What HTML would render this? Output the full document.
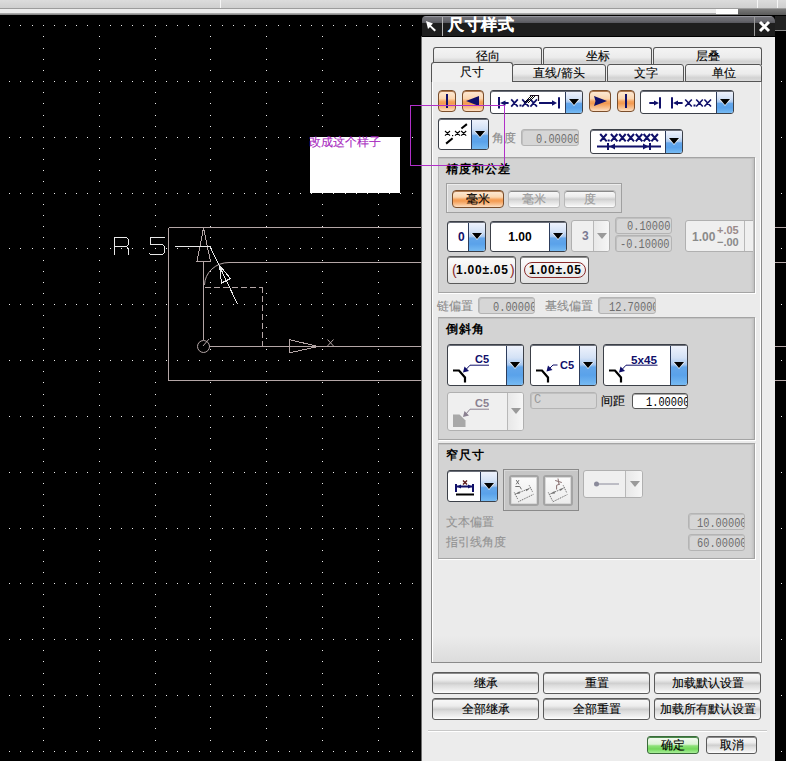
<!DOCTYPE html><html><head><meta charset="utf-8"><style>
*{box-sizing:border-box}
body{margin:0;width:786px;height:761px;overflow:hidden;background:#000;position:relative;font-family:'Liberation Sans', sans-serif;font-size:12px}
.a{position:absolute}
.t{position:absolute;white-space:nowrap;line-height:14px;-webkit-text-stroke:0.12px currentColor}
.gbtn,.tab,.obtn{-webkit-text-stroke:0.12px currentColor}
.combo{position:absolute;background:#fff;border:1px solid #3c4048;border-radius:3px;box-shadow:inset 0 1px 0 #6a6e78;overflow:hidden}
.cbtn{position:absolute;top:1px;bottom:0;right:0;background:linear-gradient(#eef2fc 0%,#d4e2f6 30%,#a8c8f0 48%,#64a6ea 54%,#5aa2ea 75%,#76baf2 100%);border-left:1px solid #2c3c5c}
.tri{position:absolute;width:0;height:0;border-left:5px solid transparent;border-right:5px solid transparent;border-top:6px solid #000}
.triw{position:absolute;width:0;height:0;border-left:6px solid transparent;border-right:6px solid transparent;border-top:7px solid rgba(255,255,255,0.85)}
.obtn{position:absolute;border:1px solid #7a4e2c;border-radius:4px;box-shadow:inset 0 1px 0 #b07a50;background:linear-gradient(#fdebd8 0%,#fbd6b0 38%,#f5a460 52%,#f39a50 62%,#f8bc88 82%,#fde0c4 100%)}
.gbtn{position:absolute;border:1px solid #5a5a5a;border-radius:3px;background:linear-gradient(#fafafa 0%,#ececec 35%,#cfcfcf 52%,#dcdcdc 62%,#f2f2f2 90%,#fff 100%);box-shadow:inset 0 1px 0 #8a8a8a;text-align:center;color:#000}
.dis{position:absolute;border:1px solid #b4b4b4;border-radius:3px;background:#d6d6d6;box-shadow:inset 1px 1px 0 #c0c0c0;overflow:hidden;font-family:'Liberation Mono',monospace;font-size:12px;color:#6e6e6e}
.dis span,.inp span{display:inline-block;transform:scaleX(0.86);transform-origin:0 0}
.grp{position:absolute;background:#d3d3d3;border:1px solid #a4a4a4;border-left-color:#b4b4b4;box-shadow:inset 0 1px 0 #c2c2c2,inset -3px 0 3px -2px rgba(0,0,0,0.12),1px 1px 0 #fff}
.tab{position:absolute;border:1px solid #555;border-bottom:none;border-radius:3px 3px 0 0;background:linear-gradient(#f4f4f4 0%,#ececec 55%,#d2d2d2 80%,#dcdcdc 100%);text-align:center;color:#000}
</style></head><body>
<div class="a" style="left:0;top:0;width:786px;height:8px;background:linear-gradient(#dcdcdc,#cfcfcf)"></div>
<div class="a" style="left:220px;top:0;width:1px;height:8px;background:#f6f6f6"></div>
<div class="a" style="left:757px;top:0;width:1px;height:8px;background:#f6f6f6"></div>
<div class="a" style="left:777px;top:0;width:1px;height:8px;background:#f6f6f6"></div>
<div class="a" style="left:0;top:8px;width:786px;height:1px;background:#9c9c9c"></div>
<div class="a" style="left:0;top:9px;width:786px;height:5px;background:#ececec"></div>
<div class="a" style="left:0;top:13px;width:786px;height:3px;background:linear-gradient(#b8b8b8,#5a5a5a)"></div>
<div class="a" style="left:716px;top:9px;width:22px;height:5px;background:#fff"></div>
<div class="a" style="left:738px;top:9px;width:48px;height:6px;background:linear-gradient(#7a7a7a,#5a5a5a)"></div>
<svg class="a" style="left:0;top:0" width="786" height="761"><path d="M9 25h1v1h-1zM9 81h1v1h-1zM9 137h1v1h-1zM9 193h1v1h-1zM9 248h1v1h-1zM9 304h1v1h-1zM9 360h1v1h-1zM9 416h1v1h-1zM9 472h1v1h-1zM9 528h1v1h-1zM9 583h1v1h-1zM9 639h1v1h-1zM9 695h1v1h-1zM9 751h1v1h-1zM20 25h1v1h-1zM20 81h1v1h-1zM20 137h1v1h-1zM20 193h1v1h-1zM20 248h1v1h-1zM20 304h1v1h-1zM20 360h1v1h-1zM20 416h1v1h-1zM20 472h1v1h-1zM20 528h1v1h-1zM20 583h1v1h-1zM20 639h1v1h-1zM20 695h1v1h-1zM20 751h1v1h-1zM32 25h1v1h-1zM32 81h1v1h-1zM32 137h1v1h-1zM32 193h1v1h-1zM32 248h1v1h-1zM32 304h1v1h-1zM32 360h1v1h-1zM32 416h1v1h-1zM32 472h1v1h-1zM32 528h1v1h-1zM32 583h1v1h-1zM32 639h1v1h-1zM32 695h1v1h-1zM32 751h1v1h-1zM43 25h1v1h-1zM43 36h1v1h-1zM43 48h1v1h-1zM43 59h1v1h-1zM43 70h1v1h-1zM43 81h1v1h-1zM43 92h1v1h-1zM43 103h1v1h-1zM43 115h1v1h-1zM43 126h1v1h-1zM43 137h1v1h-1zM43 148h1v1h-1zM43 159h1v1h-1zM43 170h1v1h-1zM43 181h1v1h-1zM43 193h1v1h-1zM43 204h1v1h-1zM43 215h1v1h-1zM43 226h1v1h-1zM43 237h1v1h-1zM43 248h1v1h-1zM43 260h1v1h-1zM43 271h1v1h-1zM43 282h1v1h-1zM43 293h1v1h-1zM43 304h1v1h-1zM43 315h1v1h-1zM43 327h1v1h-1zM43 338h1v1h-1zM43 349h1v1h-1zM43 360h1v1h-1zM43 371h1v1h-1zM43 382h1v1h-1zM43 394h1v1h-1zM43 405h1v1h-1zM43 416h1v1h-1zM43 427h1v1h-1zM43 438h1v1h-1zM43 449h1v1h-1zM43 461h1v1h-1zM43 472h1v1h-1zM43 483h1v1h-1zM43 494h1v1h-1zM43 505h1v1h-1zM43 516h1v1h-1zM43 528h1v1h-1zM43 539h1v1h-1zM43 550h1v1h-1zM43 561h1v1h-1zM43 572h1v1h-1zM43 583h1v1h-1zM43 594h1v1h-1zM43 606h1v1h-1zM43 617h1v1h-1zM43 628h1v1h-1zM43 639h1v1h-1zM43 650h1v1h-1zM43 661h1v1h-1zM43 673h1v1h-1zM43 684h1v1h-1zM43 695h1v1h-1zM43 706h1v1h-1zM43 717h1v1h-1zM43 728h1v1h-1zM43 740h1v1h-1zM43 751h1v1h-1zM54 25h1v1h-1zM54 81h1v1h-1zM54 137h1v1h-1zM54 193h1v1h-1zM54 248h1v1h-1zM54 304h1v1h-1zM54 360h1v1h-1zM54 416h1v1h-1zM54 472h1v1h-1zM54 528h1v1h-1zM54 583h1v1h-1zM54 639h1v1h-1zM54 695h1v1h-1zM54 751h1v1h-1zM65 25h1v1h-1zM65 81h1v1h-1zM65 137h1v1h-1zM65 193h1v1h-1zM65 248h1v1h-1zM65 304h1v1h-1zM65 360h1v1h-1zM65 416h1v1h-1zM65 472h1v1h-1zM65 528h1v1h-1zM65 583h1v1h-1zM65 639h1v1h-1zM65 695h1v1h-1zM65 751h1v1h-1zM76 25h1v1h-1zM76 81h1v1h-1zM76 137h1v1h-1zM76 193h1v1h-1zM76 248h1v1h-1zM76 304h1v1h-1zM76 360h1v1h-1zM76 416h1v1h-1zM76 472h1v1h-1zM76 528h1v1h-1zM76 583h1v1h-1zM76 639h1v1h-1zM76 695h1v1h-1zM76 751h1v1h-1zM87 25h1v1h-1zM87 81h1v1h-1zM87 137h1v1h-1zM87 193h1v1h-1zM87 248h1v1h-1zM87 304h1v1h-1zM87 360h1v1h-1zM87 416h1v1h-1zM87 472h1v1h-1zM87 528h1v1h-1zM87 583h1v1h-1zM87 639h1v1h-1zM87 695h1v1h-1zM87 751h1v1h-1zM99 25h1v1h-1zM99 36h1v1h-1zM99 48h1v1h-1zM99 59h1v1h-1zM99 70h1v1h-1zM99 81h1v1h-1zM99 92h1v1h-1zM99 103h1v1h-1zM99 115h1v1h-1zM99 126h1v1h-1zM99 137h1v1h-1zM99 148h1v1h-1zM99 159h1v1h-1zM99 170h1v1h-1zM99 181h1v1h-1zM99 193h1v1h-1zM99 204h1v1h-1zM99 215h1v1h-1zM99 226h1v1h-1zM99 237h1v1h-1zM99 248h1v1h-1zM99 260h1v1h-1zM99 271h1v1h-1zM99 282h1v1h-1zM99 293h1v1h-1zM99 304h1v1h-1zM99 315h1v1h-1zM99 327h1v1h-1zM99 338h1v1h-1zM99 349h1v1h-1zM99 360h1v1h-1zM99 371h1v1h-1zM99 382h1v1h-1zM99 394h1v1h-1zM99 405h1v1h-1zM99 416h1v1h-1zM99 427h1v1h-1zM99 438h1v1h-1zM99 449h1v1h-1zM99 461h1v1h-1zM99 472h1v1h-1zM99 483h1v1h-1zM99 494h1v1h-1zM99 505h1v1h-1zM99 516h1v1h-1zM99 528h1v1h-1zM99 539h1v1h-1zM99 550h1v1h-1zM99 561h1v1h-1zM99 572h1v1h-1zM99 583h1v1h-1zM99 594h1v1h-1zM99 606h1v1h-1zM99 617h1v1h-1zM99 628h1v1h-1zM99 639h1v1h-1zM99 650h1v1h-1zM99 661h1v1h-1zM99 673h1v1h-1zM99 684h1v1h-1zM99 695h1v1h-1zM99 706h1v1h-1zM99 717h1v1h-1zM99 728h1v1h-1zM99 740h1v1h-1zM99 751h1v1h-1zM110 25h1v1h-1zM110 81h1v1h-1zM110 137h1v1h-1zM110 193h1v1h-1zM110 248h1v1h-1zM110 304h1v1h-1zM110 360h1v1h-1zM110 416h1v1h-1zM110 472h1v1h-1zM110 528h1v1h-1zM110 583h1v1h-1zM110 639h1v1h-1zM110 695h1v1h-1zM110 751h1v1h-1zM121 25h1v1h-1zM121 81h1v1h-1zM121 137h1v1h-1zM121 193h1v1h-1zM121 248h1v1h-1zM121 304h1v1h-1zM121 360h1v1h-1zM121 416h1v1h-1zM121 472h1v1h-1zM121 528h1v1h-1zM121 583h1v1h-1zM121 639h1v1h-1zM121 695h1v1h-1zM121 751h1v1h-1zM132 25h1v1h-1zM132 81h1v1h-1zM132 137h1v1h-1zM132 193h1v1h-1zM132 248h1v1h-1zM132 304h1v1h-1zM132 360h1v1h-1zM132 416h1v1h-1zM132 472h1v1h-1zM132 528h1v1h-1zM132 583h1v1h-1zM132 639h1v1h-1zM132 695h1v1h-1zM132 751h1v1h-1zM143 25h1v1h-1zM143 81h1v1h-1zM143 137h1v1h-1zM143 193h1v1h-1zM143 248h1v1h-1zM143 304h1v1h-1zM143 360h1v1h-1zM143 416h1v1h-1zM143 472h1v1h-1zM143 528h1v1h-1zM143 583h1v1h-1zM143 639h1v1h-1zM143 695h1v1h-1zM143 751h1v1h-1zM155 25h1v1h-1zM155 36h1v1h-1zM155 48h1v1h-1zM155 59h1v1h-1zM155 70h1v1h-1zM155 81h1v1h-1zM155 92h1v1h-1zM155 103h1v1h-1zM155 115h1v1h-1zM155 126h1v1h-1zM155 137h1v1h-1zM155 148h1v1h-1zM155 159h1v1h-1zM155 170h1v1h-1zM155 181h1v1h-1zM155 193h1v1h-1zM155 204h1v1h-1zM155 215h1v1h-1zM155 226h1v1h-1zM155 237h1v1h-1zM155 248h1v1h-1zM155 260h1v1h-1zM155 271h1v1h-1zM155 282h1v1h-1zM155 293h1v1h-1zM155 304h1v1h-1zM155 315h1v1h-1zM155 327h1v1h-1zM155 338h1v1h-1zM155 349h1v1h-1zM155 360h1v1h-1zM155 371h1v1h-1zM155 382h1v1h-1zM155 394h1v1h-1zM155 405h1v1h-1zM155 416h1v1h-1zM155 427h1v1h-1zM155 438h1v1h-1zM155 449h1v1h-1zM155 461h1v1h-1zM155 472h1v1h-1zM155 483h1v1h-1zM155 494h1v1h-1zM155 505h1v1h-1zM155 516h1v1h-1zM155 528h1v1h-1zM155 539h1v1h-1zM155 550h1v1h-1zM155 561h1v1h-1zM155 572h1v1h-1zM155 583h1v1h-1zM155 594h1v1h-1zM155 606h1v1h-1zM155 617h1v1h-1zM155 628h1v1h-1zM155 639h1v1h-1zM155 650h1v1h-1zM155 661h1v1h-1zM155 673h1v1h-1zM155 684h1v1h-1zM155 695h1v1h-1zM155 706h1v1h-1zM155 717h1v1h-1zM155 728h1v1h-1zM155 740h1v1h-1zM155 751h1v1h-1zM166 25h1v1h-1zM166 81h1v1h-1zM166 137h1v1h-1zM166 193h1v1h-1zM166 248h1v1h-1zM166 304h1v1h-1zM166 360h1v1h-1zM166 416h1v1h-1zM166 472h1v1h-1zM166 528h1v1h-1zM166 583h1v1h-1zM166 639h1v1h-1zM166 695h1v1h-1zM166 751h1v1h-1zM177 25h1v1h-1zM177 81h1v1h-1zM177 137h1v1h-1zM177 193h1v1h-1zM177 248h1v1h-1zM177 304h1v1h-1zM177 360h1v1h-1zM177 416h1v1h-1zM177 472h1v1h-1zM177 528h1v1h-1zM177 583h1v1h-1zM177 639h1v1h-1zM177 695h1v1h-1zM177 751h1v1h-1zM188 25h1v1h-1zM188 81h1v1h-1zM188 137h1v1h-1zM188 193h1v1h-1zM188 248h1v1h-1zM188 304h1v1h-1zM188 360h1v1h-1zM188 416h1v1h-1zM188 472h1v1h-1zM188 528h1v1h-1zM188 583h1v1h-1zM188 639h1v1h-1zM188 695h1v1h-1zM188 751h1v1h-1zM199 25h1v1h-1zM199 81h1v1h-1zM199 137h1v1h-1zM199 193h1v1h-1zM199 248h1v1h-1zM199 304h1v1h-1zM199 360h1v1h-1zM199 416h1v1h-1zM199 472h1v1h-1zM199 528h1v1h-1zM199 583h1v1h-1zM199 639h1v1h-1zM199 695h1v1h-1zM199 751h1v1h-1zM210 25h1v1h-1zM210 36h1v1h-1zM210 48h1v1h-1zM210 59h1v1h-1zM210 70h1v1h-1zM210 81h1v1h-1zM210 92h1v1h-1zM210 103h1v1h-1zM210 115h1v1h-1zM210 126h1v1h-1zM210 137h1v1h-1zM210 148h1v1h-1zM210 159h1v1h-1zM210 170h1v1h-1zM210 181h1v1h-1zM210 193h1v1h-1zM210 204h1v1h-1zM210 215h1v1h-1zM210 226h1v1h-1zM210 237h1v1h-1zM210 248h1v1h-1zM210 260h1v1h-1zM210 271h1v1h-1zM210 282h1v1h-1zM210 293h1v1h-1zM210 304h1v1h-1zM210 315h1v1h-1zM210 327h1v1h-1zM210 338h1v1h-1zM210 349h1v1h-1zM210 360h1v1h-1zM210 371h1v1h-1zM210 382h1v1h-1zM210 394h1v1h-1zM210 405h1v1h-1zM210 416h1v1h-1zM210 427h1v1h-1zM210 438h1v1h-1zM210 449h1v1h-1zM210 461h1v1h-1zM210 472h1v1h-1zM210 483h1v1h-1zM210 494h1v1h-1zM210 505h1v1h-1zM210 516h1v1h-1zM210 528h1v1h-1zM210 539h1v1h-1zM210 550h1v1h-1zM210 561h1v1h-1zM210 572h1v1h-1zM210 583h1v1h-1zM210 594h1v1h-1zM210 606h1v1h-1zM210 617h1v1h-1zM210 628h1v1h-1zM210 639h1v1h-1zM210 650h1v1h-1zM210 661h1v1h-1zM210 673h1v1h-1zM210 684h1v1h-1zM210 695h1v1h-1zM210 706h1v1h-1zM210 717h1v1h-1zM210 728h1v1h-1zM210 740h1v1h-1zM210 751h1v1h-1zM222 25h1v1h-1zM222 81h1v1h-1zM222 137h1v1h-1zM222 193h1v1h-1zM222 248h1v1h-1zM222 304h1v1h-1zM222 360h1v1h-1zM222 416h1v1h-1zM222 472h1v1h-1zM222 528h1v1h-1zM222 583h1v1h-1zM222 639h1v1h-1zM222 695h1v1h-1zM222 751h1v1h-1zM233 25h1v1h-1zM233 81h1v1h-1zM233 137h1v1h-1zM233 193h1v1h-1zM233 248h1v1h-1zM233 304h1v1h-1zM233 360h1v1h-1zM233 416h1v1h-1zM233 472h1v1h-1zM233 528h1v1h-1zM233 583h1v1h-1zM233 639h1v1h-1zM233 695h1v1h-1zM233 751h1v1h-1zM244 25h1v1h-1zM244 81h1v1h-1zM244 137h1v1h-1zM244 193h1v1h-1zM244 248h1v1h-1zM244 304h1v1h-1zM244 360h1v1h-1zM244 416h1v1h-1zM244 472h1v1h-1zM244 528h1v1h-1zM244 583h1v1h-1zM244 639h1v1h-1zM244 695h1v1h-1zM244 751h1v1h-1zM255 25h1v1h-1zM255 81h1v1h-1zM255 137h1v1h-1zM255 193h1v1h-1zM255 248h1v1h-1zM255 304h1v1h-1zM255 360h1v1h-1zM255 416h1v1h-1zM255 472h1v1h-1zM255 528h1v1h-1zM255 583h1v1h-1zM255 639h1v1h-1zM255 695h1v1h-1zM255 751h1v1h-1zM266 25h1v1h-1zM266 36h1v1h-1zM266 48h1v1h-1zM266 59h1v1h-1zM266 70h1v1h-1zM266 81h1v1h-1zM266 92h1v1h-1zM266 103h1v1h-1zM266 115h1v1h-1zM266 126h1v1h-1zM266 137h1v1h-1zM266 148h1v1h-1zM266 159h1v1h-1zM266 170h1v1h-1zM266 181h1v1h-1zM266 193h1v1h-1zM266 204h1v1h-1zM266 215h1v1h-1zM266 226h1v1h-1zM266 237h1v1h-1zM266 248h1v1h-1zM266 260h1v1h-1zM266 271h1v1h-1zM266 282h1v1h-1zM266 293h1v1h-1zM266 304h1v1h-1zM266 315h1v1h-1zM266 327h1v1h-1zM266 338h1v1h-1zM266 349h1v1h-1zM266 360h1v1h-1zM266 371h1v1h-1zM266 382h1v1h-1zM266 394h1v1h-1zM266 405h1v1h-1zM266 416h1v1h-1zM266 427h1v1h-1zM266 438h1v1h-1zM266 449h1v1h-1zM266 461h1v1h-1zM266 472h1v1h-1zM266 483h1v1h-1zM266 494h1v1h-1zM266 505h1v1h-1zM266 516h1v1h-1zM266 528h1v1h-1zM266 539h1v1h-1zM266 550h1v1h-1zM266 561h1v1h-1zM266 572h1v1h-1zM266 583h1v1h-1zM266 594h1v1h-1zM266 606h1v1h-1zM266 617h1v1h-1zM266 628h1v1h-1zM266 639h1v1h-1zM266 650h1v1h-1zM266 661h1v1h-1zM266 673h1v1h-1zM266 684h1v1h-1zM266 695h1v1h-1zM266 706h1v1h-1zM266 717h1v1h-1zM266 728h1v1h-1zM266 740h1v1h-1zM266 751h1v1h-1zM278 25h1v1h-1zM278 81h1v1h-1zM278 137h1v1h-1zM278 193h1v1h-1zM278 248h1v1h-1zM278 304h1v1h-1zM278 360h1v1h-1zM278 416h1v1h-1zM278 472h1v1h-1zM278 528h1v1h-1zM278 583h1v1h-1zM278 639h1v1h-1zM278 695h1v1h-1zM278 751h1v1h-1zM289 25h1v1h-1zM289 81h1v1h-1zM289 137h1v1h-1zM289 193h1v1h-1zM289 248h1v1h-1zM289 304h1v1h-1zM289 360h1v1h-1zM289 416h1v1h-1zM289 472h1v1h-1zM289 528h1v1h-1zM289 583h1v1h-1zM289 639h1v1h-1zM289 695h1v1h-1zM289 751h1v1h-1zM300 25h1v1h-1zM300 81h1v1h-1zM300 137h1v1h-1zM300 193h1v1h-1zM300 248h1v1h-1zM300 304h1v1h-1zM300 360h1v1h-1zM300 416h1v1h-1zM300 472h1v1h-1zM300 528h1v1h-1zM300 583h1v1h-1zM300 639h1v1h-1zM300 695h1v1h-1zM300 751h1v1h-1zM311 25h1v1h-1zM311 81h1v1h-1zM311 137h1v1h-1zM311 193h1v1h-1zM311 248h1v1h-1zM311 304h1v1h-1zM311 360h1v1h-1zM311 416h1v1h-1zM311 472h1v1h-1zM311 528h1v1h-1zM311 583h1v1h-1zM311 639h1v1h-1zM311 695h1v1h-1zM311 751h1v1h-1zM322 25h1v1h-1zM322 36h1v1h-1zM322 48h1v1h-1zM322 59h1v1h-1zM322 70h1v1h-1zM322 81h1v1h-1zM322 92h1v1h-1zM322 103h1v1h-1zM322 115h1v1h-1zM322 126h1v1h-1zM322 137h1v1h-1zM322 148h1v1h-1zM322 159h1v1h-1zM322 170h1v1h-1zM322 181h1v1h-1zM322 193h1v1h-1zM322 204h1v1h-1zM322 215h1v1h-1zM322 226h1v1h-1zM322 237h1v1h-1zM322 248h1v1h-1zM322 260h1v1h-1zM322 271h1v1h-1zM322 282h1v1h-1zM322 293h1v1h-1zM322 304h1v1h-1zM322 315h1v1h-1zM322 327h1v1h-1zM322 338h1v1h-1zM322 349h1v1h-1zM322 360h1v1h-1zM322 371h1v1h-1zM322 382h1v1h-1zM322 394h1v1h-1zM322 405h1v1h-1zM322 416h1v1h-1zM322 427h1v1h-1zM322 438h1v1h-1zM322 449h1v1h-1zM322 461h1v1h-1zM322 472h1v1h-1zM322 483h1v1h-1zM322 494h1v1h-1zM322 505h1v1h-1zM322 516h1v1h-1zM322 528h1v1h-1zM322 539h1v1h-1zM322 550h1v1h-1zM322 561h1v1h-1zM322 572h1v1h-1zM322 583h1v1h-1zM322 594h1v1h-1zM322 606h1v1h-1zM322 617h1v1h-1zM322 628h1v1h-1zM322 639h1v1h-1zM322 650h1v1h-1zM322 661h1v1h-1zM322 673h1v1h-1zM322 684h1v1h-1zM322 695h1v1h-1zM322 706h1v1h-1zM322 717h1v1h-1zM322 728h1v1h-1zM322 740h1v1h-1zM322 751h1v1h-1zM333 25h1v1h-1zM333 81h1v1h-1zM333 137h1v1h-1zM333 193h1v1h-1zM333 248h1v1h-1zM333 304h1v1h-1zM333 360h1v1h-1zM333 416h1v1h-1zM333 472h1v1h-1zM333 528h1v1h-1zM333 583h1v1h-1zM333 639h1v1h-1zM333 695h1v1h-1zM333 751h1v1h-1zM345 25h1v1h-1zM345 81h1v1h-1zM345 137h1v1h-1zM345 193h1v1h-1zM345 248h1v1h-1zM345 304h1v1h-1zM345 360h1v1h-1zM345 416h1v1h-1zM345 472h1v1h-1zM345 528h1v1h-1zM345 583h1v1h-1zM345 639h1v1h-1zM345 695h1v1h-1zM345 751h1v1h-1zM356 25h1v1h-1zM356 81h1v1h-1zM356 137h1v1h-1zM356 193h1v1h-1zM356 248h1v1h-1zM356 304h1v1h-1zM356 360h1v1h-1zM356 416h1v1h-1zM356 472h1v1h-1zM356 528h1v1h-1zM356 583h1v1h-1zM356 639h1v1h-1zM356 695h1v1h-1zM356 751h1v1h-1zM367 25h1v1h-1zM367 81h1v1h-1zM367 137h1v1h-1zM367 193h1v1h-1zM367 248h1v1h-1zM367 304h1v1h-1zM367 360h1v1h-1zM367 416h1v1h-1zM367 472h1v1h-1zM367 528h1v1h-1zM367 583h1v1h-1zM367 639h1v1h-1zM367 695h1v1h-1zM367 751h1v1h-1zM378 25h1v1h-1zM378 36h1v1h-1zM378 48h1v1h-1zM378 59h1v1h-1zM378 70h1v1h-1zM378 81h1v1h-1zM378 92h1v1h-1zM378 103h1v1h-1zM378 115h1v1h-1zM378 126h1v1h-1zM378 137h1v1h-1zM378 148h1v1h-1zM378 159h1v1h-1zM378 170h1v1h-1zM378 181h1v1h-1zM378 193h1v1h-1zM378 204h1v1h-1zM378 215h1v1h-1zM378 226h1v1h-1zM378 237h1v1h-1zM378 248h1v1h-1zM378 260h1v1h-1zM378 271h1v1h-1zM378 282h1v1h-1zM378 293h1v1h-1zM378 304h1v1h-1zM378 315h1v1h-1zM378 327h1v1h-1zM378 338h1v1h-1zM378 349h1v1h-1zM378 360h1v1h-1zM378 371h1v1h-1zM378 382h1v1h-1zM378 394h1v1h-1zM378 405h1v1h-1zM378 416h1v1h-1zM378 427h1v1h-1zM378 438h1v1h-1zM378 449h1v1h-1zM378 461h1v1h-1zM378 472h1v1h-1zM378 483h1v1h-1zM378 494h1v1h-1zM378 505h1v1h-1zM378 516h1v1h-1zM378 528h1v1h-1zM378 539h1v1h-1zM378 550h1v1h-1zM378 561h1v1h-1zM378 572h1v1h-1zM378 583h1v1h-1zM378 594h1v1h-1zM378 606h1v1h-1zM378 617h1v1h-1zM378 628h1v1h-1zM378 639h1v1h-1zM378 650h1v1h-1zM378 661h1v1h-1zM378 673h1v1h-1zM378 684h1v1h-1zM378 695h1v1h-1zM378 706h1v1h-1zM378 717h1v1h-1zM378 728h1v1h-1zM378 740h1v1h-1zM378 751h1v1h-1zM389 25h1v1h-1zM389 81h1v1h-1zM389 137h1v1h-1zM389 193h1v1h-1zM389 248h1v1h-1zM389 304h1v1h-1zM389 360h1v1h-1zM389 416h1v1h-1zM389 472h1v1h-1zM389 528h1v1h-1zM389 583h1v1h-1zM389 639h1v1h-1zM389 695h1v1h-1zM389 751h1v1h-1zM400 25h1v1h-1zM400 81h1v1h-1zM400 137h1v1h-1zM400 193h1v1h-1zM400 248h1v1h-1zM400 304h1v1h-1zM400 360h1v1h-1zM400 416h1v1h-1zM400 472h1v1h-1zM400 528h1v1h-1zM400 583h1v1h-1zM400 639h1v1h-1zM400 695h1v1h-1zM400 751h1v1h-1zM412 25h1v1h-1zM412 81h1v1h-1zM412 137h1v1h-1zM412 193h1v1h-1zM412 248h1v1h-1zM412 304h1v1h-1zM412 360h1v1h-1zM412 416h1v1h-1zM412 472h1v1h-1zM412 528h1v1h-1zM412 583h1v1h-1zM412 639h1v1h-1zM412 695h1v1h-1zM412 751h1v1h-1zM423 25h1v1h-1zM423 81h1v1h-1zM423 137h1v1h-1zM423 193h1v1h-1zM423 248h1v1h-1zM423 304h1v1h-1zM423 360h1v1h-1zM423 416h1v1h-1zM423 472h1v1h-1zM423 528h1v1h-1zM423 583h1v1h-1zM423 639h1v1h-1zM423 695h1v1h-1zM423 751h1v1h-1zM434 25h1v1h-1zM434 36h1v1h-1zM434 48h1v1h-1zM434 59h1v1h-1zM434 70h1v1h-1zM434 81h1v1h-1zM434 92h1v1h-1zM434 103h1v1h-1zM434 115h1v1h-1zM434 126h1v1h-1zM434 137h1v1h-1zM434 148h1v1h-1zM434 159h1v1h-1zM434 170h1v1h-1zM434 181h1v1h-1zM434 193h1v1h-1zM434 204h1v1h-1zM434 215h1v1h-1zM434 226h1v1h-1zM434 237h1v1h-1zM434 248h1v1h-1zM434 260h1v1h-1zM434 271h1v1h-1zM434 282h1v1h-1zM434 293h1v1h-1zM434 304h1v1h-1zM434 315h1v1h-1zM434 327h1v1h-1zM434 338h1v1h-1zM434 349h1v1h-1zM434 360h1v1h-1zM434 371h1v1h-1zM434 382h1v1h-1zM434 394h1v1h-1zM434 405h1v1h-1zM434 416h1v1h-1zM434 427h1v1h-1zM434 438h1v1h-1zM434 449h1v1h-1zM434 461h1v1h-1zM434 472h1v1h-1zM434 483h1v1h-1zM434 494h1v1h-1zM434 505h1v1h-1zM434 516h1v1h-1zM434 528h1v1h-1zM434 539h1v1h-1zM434 550h1v1h-1zM434 561h1v1h-1zM434 572h1v1h-1zM434 583h1v1h-1zM434 594h1v1h-1zM434 606h1v1h-1zM434 617h1v1h-1zM434 628h1v1h-1zM434 639h1v1h-1zM434 650h1v1h-1zM434 661h1v1h-1zM434 673h1v1h-1zM434 684h1v1h-1zM434 695h1v1h-1zM434 706h1v1h-1zM434 717h1v1h-1zM434 728h1v1h-1zM434 740h1v1h-1zM434 751h1v1h-1zM445 25h1v1h-1zM445 81h1v1h-1zM445 137h1v1h-1zM445 193h1v1h-1zM445 248h1v1h-1zM445 304h1v1h-1zM445 360h1v1h-1zM445 416h1v1h-1zM445 472h1v1h-1zM445 528h1v1h-1zM445 583h1v1h-1zM445 639h1v1h-1zM445 695h1v1h-1zM445 751h1v1h-1zM456 25h1v1h-1zM456 81h1v1h-1zM456 137h1v1h-1zM456 193h1v1h-1zM456 248h1v1h-1zM456 304h1v1h-1zM456 360h1v1h-1zM456 416h1v1h-1zM456 472h1v1h-1zM456 528h1v1h-1zM456 583h1v1h-1zM456 639h1v1h-1zM456 695h1v1h-1zM456 751h1v1h-1zM468 25h1v1h-1zM468 81h1v1h-1zM468 137h1v1h-1zM468 193h1v1h-1zM468 248h1v1h-1zM468 304h1v1h-1zM468 360h1v1h-1zM468 416h1v1h-1zM468 472h1v1h-1zM468 528h1v1h-1zM468 583h1v1h-1zM468 639h1v1h-1zM468 695h1v1h-1zM468 751h1v1h-1zM479 25h1v1h-1zM479 81h1v1h-1zM479 137h1v1h-1zM479 193h1v1h-1zM479 248h1v1h-1zM479 304h1v1h-1zM479 360h1v1h-1zM479 416h1v1h-1zM479 472h1v1h-1zM479 528h1v1h-1zM479 583h1v1h-1zM479 639h1v1h-1zM479 695h1v1h-1zM479 751h1v1h-1zM490 25h1v1h-1zM490 36h1v1h-1zM490 48h1v1h-1zM490 59h1v1h-1zM490 70h1v1h-1zM490 81h1v1h-1zM490 92h1v1h-1zM490 103h1v1h-1zM490 115h1v1h-1zM490 126h1v1h-1zM490 137h1v1h-1zM490 148h1v1h-1zM490 159h1v1h-1zM490 170h1v1h-1zM490 181h1v1h-1zM490 193h1v1h-1zM490 204h1v1h-1zM490 215h1v1h-1zM490 226h1v1h-1zM490 237h1v1h-1zM490 248h1v1h-1zM490 260h1v1h-1zM490 271h1v1h-1zM490 282h1v1h-1zM490 293h1v1h-1zM490 304h1v1h-1zM490 315h1v1h-1zM490 327h1v1h-1zM490 338h1v1h-1zM490 349h1v1h-1zM490 360h1v1h-1zM490 371h1v1h-1zM490 382h1v1h-1zM490 394h1v1h-1zM490 405h1v1h-1zM490 416h1v1h-1zM490 427h1v1h-1zM490 438h1v1h-1zM490 449h1v1h-1zM490 461h1v1h-1zM490 472h1v1h-1zM490 483h1v1h-1zM490 494h1v1h-1zM490 505h1v1h-1zM490 516h1v1h-1zM490 528h1v1h-1zM490 539h1v1h-1zM490 550h1v1h-1zM490 561h1v1h-1zM490 572h1v1h-1zM490 583h1v1h-1zM490 594h1v1h-1zM490 606h1v1h-1zM490 617h1v1h-1zM490 628h1v1h-1zM490 639h1v1h-1zM490 650h1v1h-1zM490 661h1v1h-1zM490 673h1v1h-1zM490 684h1v1h-1zM490 695h1v1h-1zM490 706h1v1h-1zM490 717h1v1h-1zM490 728h1v1h-1zM490 740h1v1h-1zM490 751h1v1h-1zM501 25h1v1h-1zM501 81h1v1h-1zM501 137h1v1h-1zM501 193h1v1h-1zM501 248h1v1h-1zM501 304h1v1h-1zM501 360h1v1h-1zM501 416h1v1h-1zM501 472h1v1h-1zM501 528h1v1h-1zM501 583h1v1h-1zM501 639h1v1h-1zM501 695h1v1h-1zM501 751h1v1h-1zM512 25h1v1h-1zM512 81h1v1h-1zM512 137h1v1h-1zM512 193h1v1h-1zM512 248h1v1h-1zM512 304h1v1h-1zM512 360h1v1h-1zM512 416h1v1h-1zM512 472h1v1h-1zM512 528h1v1h-1zM512 583h1v1h-1zM512 639h1v1h-1zM512 695h1v1h-1zM512 751h1v1h-1zM523 25h1v1h-1zM523 81h1v1h-1zM523 137h1v1h-1zM523 193h1v1h-1zM523 248h1v1h-1zM523 304h1v1h-1zM523 360h1v1h-1zM523 416h1v1h-1zM523 472h1v1h-1zM523 528h1v1h-1zM523 583h1v1h-1zM523 639h1v1h-1zM523 695h1v1h-1zM523 751h1v1h-1zM535 25h1v1h-1zM535 81h1v1h-1zM535 137h1v1h-1zM535 193h1v1h-1zM535 248h1v1h-1zM535 304h1v1h-1zM535 360h1v1h-1zM535 416h1v1h-1zM535 472h1v1h-1zM535 528h1v1h-1zM535 583h1v1h-1zM535 639h1v1h-1zM535 695h1v1h-1zM535 751h1v1h-1zM546 25h1v1h-1zM546 36h1v1h-1zM546 48h1v1h-1zM546 59h1v1h-1zM546 70h1v1h-1zM546 81h1v1h-1zM546 92h1v1h-1zM546 103h1v1h-1zM546 115h1v1h-1zM546 126h1v1h-1zM546 137h1v1h-1zM546 148h1v1h-1zM546 159h1v1h-1zM546 170h1v1h-1zM546 181h1v1h-1zM546 193h1v1h-1zM546 204h1v1h-1zM546 215h1v1h-1zM546 226h1v1h-1zM546 237h1v1h-1zM546 248h1v1h-1zM546 260h1v1h-1zM546 271h1v1h-1zM546 282h1v1h-1zM546 293h1v1h-1zM546 304h1v1h-1zM546 315h1v1h-1zM546 327h1v1h-1zM546 338h1v1h-1zM546 349h1v1h-1zM546 360h1v1h-1zM546 371h1v1h-1zM546 382h1v1h-1zM546 394h1v1h-1zM546 405h1v1h-1zM546 416h1v1h-1zM546 427h1v1h-1zM546 438h1v1h-1zM546 449h1v1h-1zM546 461h1v1h-1zM546 472h1v1h-1zM546 483h1v1h-1zM546 494h1v1h-1zM546 505h1v1h-1zM546 516h1v1h-1zM546 528h1v1h-1zM546 539h1v1h-1zM546 550h1v1h-1zM546 561h1v1h-1zM546 572h1v1h-1zM546 583h1v1h-1zM546 594h1v1h-1zM546 606h1v1h-1zM546 617h1v1h-1zM546 628h1v1h-1zM546 639h1v1h-1zM546 650h1v1h-1zM546 661h1v1h-1zM546 673h1v1h-1zM546 684h1v1h-1zM546 695h1v1h-1zM546 706h1v1h-1zM546 717h1v1h-1zM546 728h1v1h-1zM546 740h1v1h-1zM546 751h1v1h-1zM557 25h1v1h-1zM557 81h1v1h-1zM557 137h1v1h-1zM557 193h1v1h-1zM557 248h1v1h-1zM557 304h1v1h-1zM557 360h1v1h-1zM557 416h1v1h-1zM557 472h1v1h-1zM557 528h1v1h-1zM557 583h1v1h-1zM557 639h1v1h-1zM557 695h1v1h-1zM557 751h1v1h-1zM568 25h1v1h-1zM568 81h1v1h-1zM568 137h1v1h-1zM568 193h1v1h-1zM568 248h1v1h-1zM568 304h1v1h-1zM568 360h1v1h-1zM568 416h1v1h-1zM568 472h1v1h-1zM568 528h1v1h-1zM568 583h1v1h-1zM568 639h1v1h-1zM568 695h1v1h-1zM568 751h1v1h-1zM579 25h1v1h-1zM579 81h1v1h-1zM579 137h1v1h-1zM579 193h1v1h-1zM579 248h1v1h-1zM579 304h1v1h-1zM579 360h1v1h-1zM579 416h1v1h-1zM579 472h1v1h-1zM579 528h1v1h-1zM579 583h1v1h-1zM579 639h1v1h-1zM579 695h1v1h-1zM579 751h1v1h-1zM591 25h1v1h-1zM591 81h1v1h-1zM591 137h1v1h-1zM591 193h1v1h-1zM591 248h1v1h-1zM591 304h1v1h-1zM591 360h1v1h-1zM591 416h1v1h-1zM591 472h1v1h-1zM591 528h1v1h-1zM591 583h1v1h-1zM591 639h1v1h-1zM591 695h1v1h-1zM591 751h1v1h-1zM602 25h1v1h-1zM602 36h1v1h-1zM602 48h1v1h-1zM602 59h1v1h-1zM602 70h1v1h-1zM602 81h1v1h-1zM602 92h1v1h-1zM602 103h1v1h-1zM602 115h1v1h-1zM602 126h1v1h-1zM602 137h1v1h-1zM602 148h1v1h-1zM602 159h1v1h-1zM602 170h1v1h-1zM602 181h1v1h-1zM602 193h1v1h-1zM602 204h1v1h-1zM602 215h1v1h-1zM602 226h1v1h-1zM602 237h1v1h-1zM602 248h1v1h-1zM602 260h1v1h-1zM602 271h1v1h-1zM602 282h1v1h-1zM602 293h1v1h-1zM602 304h1v1h-1zM602 315h1v1h-1zM602 327h1v1h-1zM602 338h1v1h-1zM602 349h1v1h-1zM602 360h1v1h-1zM602 371h1v1h-1zM602 382h1v1h-1zM602 394h1v1h-1zM602 405h1v1h-1zM602 416h1v1h-1zM602 427h1v1h-1zM602 438h1v1h-1zM602 449h1v1h-1zM602 461h1v1h-1zM602 472h1v1h-1zM602 483h1v1h-1zM602 494h1v1h-1zM602 505h1v1h-1zM602 516h1v1h-1zM602 528h1v1h-1zM602 539h1v1h-1zM602 550h1v1h-1zM602 561h1v1h-1zM602 572h1v1h-1zM602 583h1v1h-1zM602 594h1v1h-1zM602 606h1v1h-1zM602 617h1v1h-1zM602 628h1v1h-1zM602 639h1v1h-1zM602 650h1v1h-1zM602 661h1v1h-1zM602 673h1v1h-1zM602 684h1v1h-1zM602 695h1v1h-1zM602 706h1v1h-1zM602 717h1v1h-1zM602 728h1v1h-1zM602 740h1v1h-1zM602 751h1v1h-1zM613 25h1v1h-1zM613 81h1v1h-1zM613 137h1v1h-1zM613 193h1v1h-1zM613 248h1v1h-1zM613 304h1v1h-1zM613 360h1v1h-1zM613 416h1v1h-1zM613 472h1v1h-1zM613 528h1v1h-1zM613 583h1v1h-1zM613 639h1v1h-1zM613 695h1v1h-1zM613 751h1v1h-1zM624 25h1v1h-1zM624 81h1v1h-1zM624 137h1v1h-1zM624 193h1v1h-1zM624 248h1v1h-1zM624 304h1v1h-1zM624 360h1v1h-1zM624 416h1v1h-1zM624 472h1v1h-1zM624 528h1v1h-1zM624 583h1v1h-1zM624 639h1v1h-1zM624 695h1v1h-1zM624 751h1v1h-1zM635 25h1v1h-1zM635 81h1v1h-1zM635 137h1v1h-1zM635 193h1v1h-1zM635 248h1v1h-1zM635 304h1v1h-1zM635 360h1v1h-1zM635 416h1v1h-1zM635 472h1v1h-1zM635 528h1v1h-1zM635 583h1v1h-1zM635 639h1v1h-1zM635 695h1v1h-1zM635 751h1v1h-1zM646 25h1v1h-1zM646 81h1v1h-1zM646 137h1v1h-1zM646 193h1v1h-1zM646 248h1v1h-1zM646 304h1v1h-1zM646 360h1v1h-1zM646 416h1v1h-1zM646 472h1v1h-1zM646 528h1v1h-1zM646 583h1v1h-1zM646 639h1v1h-1zM646 695h1v1h-1zM646 751h1v1h-1zM658 25h1v1h-1zM658 36h1v1h-1zM658 48h1v1h-1zM658 59h1v1h-1zM658 70h1v1h-1zM658 81h1v1h-1zM658 92h1v1h-1zM658 103h1v1h-1zM658 115h1v1h-1zM658 126h1v1h-1zM658 137h1v1h-1zM658 148h1v1h-1zM658 159h1v1h-1zM658 170h1v1h-1zM658 181h1v1h-1zM658 193h1v1h-1zM658 204h1v1h-1zM658 215h1v1h-1zM658 226h1v1h-1zM658 237h1v1h-1zM658 248h1v1h-1zM658 260h1v1h-1zM658 271h1v1h-1zM658 282h1v1h-1zM658 293h1v1h-1zM658 304h1v1h-1zM658 315h1v1h-1zM658 327h1v1h-1zM658 338h1v1h-1zM658 349h1v1h-1zM658 360h1v1h-1zM658 371h1v1h-1zM658 382h1v1h-1zM658 394h1v1h-1zM658 405h1v1h-1zM658 416h1v1h-1zM658 427h1v1h-1zM658 438h1v1h-1zM658 449h1v1h-1zM658 461h1v1h-1zM658 472h1v1h-1zM658 483h1v1h-1zM658 494h1v1h-1zM658 505h1v1h-1zM658 516h1v1h-1zM658 528h1v1h-1zM658 539h1v1h-1zM658 550h1v1h-1zM658 561h1v1h-1zM658 572h1v1h-1zM658 583h1v1h-1zM658 594h1v1h-1zM658 606h1v1h-1zM658 617h1v1h-1zM658 628h1v1h-1zM658 639h1v1h-1zM658 650h1v1h-1zM658 661h1v1h-1zM658 673h1v1h-1zM658 684h1v1h-1zM658 695h1v1h-1zM658 706h1v1h-1zM658 717h1v1h-1zM658 728h1v1h-1zM658 740h1v1h-1zM658 751h1v1h-1zM669 25h1v1h-1zM669 81h1v1h-1zM669 137h1v1h-1zM669 193h1v1h-1zM669 248h1v1h-1zM669 304h1v1h-1zM669 360h1v1h-1zM669 416h1v1h-1zM669 472h1v1h-1zM669 528h1v1h-1zM669 583h1v1h-1zM669 639h1v1h-1zM669 695h1v1h-1zM669 751h1v1h-1zM680 25h1v1h-1zM680 81h1v1h-1zM680 137h1v1h-1zM680 193h1v1h-1zM680 248h1v1h-1zM680 304h1v1h-1zM680 360h1v1h-1zM680 416h1v1h-1zM680 472h1v1h-1zM680 528h1v1h-1zM680 583h1v1h-1zM680 639h1v1h-1zM680 695h1v1h-1zM680 751h1v1h-1zM691 25h1v1h-1zM691 81h1v1h-1zM691 137h1v1h-1zM691 193h1v1h-1zM691 248h1v1h-1zM691 304h1v1h-1zM691 360h1v1h-1zM691 416h1v1h-1zM691 472h1v1h-1zM691 528h1v1h-1zM691 583h1v1h-1zM691 639h1v1h-1zM691 695h1v1h-1zM691 751h1v1h-1zM702 25h1v1h-1zM702 81h1v1h-1zM702 137h1v1h-1zM702 193h1v1h-1zM702 248h1v1h-1zM702 304h1v1h-1zM702 360h1v1h-1zM702 416h1v1h-1zM702 472h1v1h-1zM702 528h1v1h-1zM702 583h1v1h-1zM702 639h1v1h-1zM702 695h1v1h-1zM702 751h1v1h-1zM714 25h1v1h-1zM714 36h1v1h-1zM714 48h1v1h-1zM714 59h1v1h-1zM714 70h1v1h-1zM714 81h1v1h-1zM714 92h1v1h-1zM714 103h1v1h-1zM714 115h1v1h-1zM714 126h1v1h-1zM714 137h1v1h-1zM714 148h1v1h-1zM714 159h1v1h-1zM714 170h1v1h-1zM714 181h1v1h-1zM714 193h1v1h-1zM714 204h1v1h-1zM714 215h1v1h-1zM714 226h1v1h-1zM714 237h1v1h-1zM714 248h1v1h-1zM714 260h1v1h-1zM714 271h1v1h-1zM714 282h1v1h-1zM714 293h1v1h-1zM714 304h1v1h-1zM714 315h1v1h-1zM714 327h1v1h-1zM714 338h1v1h-1zM714 349h1v1h-1zM714 360h1v1h-1zM714 371h1v1h-1zM714 382h1v1h-1zM714 394h1v1h-1zM714 405h1v1h-1zM714 416h1v1h-1zM714 427h1v1h-1zM714 438h1v1h-1zM714 449h1v1h-1zM714 461h1v1h-1zM714 472h1v1h-1zM714 483h1v1h-1zM714 494h1v1h-1zM714 505h1v1h-1zM714 516h1v1h-1zM714 528h1v1h-1zM714 539h1v1h-1zM714 550h1v1h-1zM714 561h1v1h-1zM714 572h1v1h-1zM714 583h1v1h-1zM714 594h1v1h-1zM714 606h1v1h-1zM714 617h1v1h-1zM714 628h1v1h-1zM714 639h1v1h-1zM714 650h1v1h-1zM714 661h1v1h-1zM714 673h1v1h-1zM714 684h1v1h-1zM714 695h1v1h-1zM714 706h1v1h-1zM714 717h1v1h-1zM714 728h1v1h-1zM714 740h1v1h-1zM714 751h1v1h-1zM725 25h1v1h-1zM725 81h1v1h-1zM725 137h1v1h-1zM725 193h1v1h-1zM725 248h1v1h-1zM725 304h1v1h-1zM725 360h1v1h-1zM725 416h1v1h-1zM725 472h1v1h-1zM725 528h1v1h-1zM725 583h1v1h-1zM725 639h1v1h-1zM725 695h1v1h-1zM725 751h1v1h-1zM736 25h1v1h-1zM736 81h1v1h-1zM736 137h1v1h-1zM736 193h1v1h-1zM736 248h1v1h-1zM736 304h1v1h-1zM736 360h1v1h-1zM736 416h1v1h-1zM736 472h1v1h-1zM736 528h1v1h-1zM736 583h1v1h-1zM736 639h1v1h-1zM736 695h1v1h-1zM736 751h1v1h-1zM747 25h1v1h-1zM747 81h1v1h-1zM747 137h1v1h-1zM747 193h1v1h-1zM747 248h1v1h-1zM747 304h1v1h-1zM747 360h1v1h-1zM747 416h1v1h-1zM747 472h1v1h-1zM747 528h1v1h-1zM747 583h1v1h-1zM747 639h1v1h-1zM747 695h1v1h-1zM747 751h1v1h-1zM758 25h1v1h-1zM758 81h1v1h-1zM758 137h1v1h-1zM758 193h1v1h-1zM758 248h1v1h-1zM758 304h1v1h-1zM758 360h1v1h-1zM758 416h1v1h-1zM758 472h1v1h-1zM758 528h1v1h-1zM758 583h1v1h-1zM758 639h1v1h-1zM758 695h1v1h-1zM758 751h1v1h-1zM769 25h1v1h-1zM769 36h1v1h-1zM769 48h1v1h-1zM769 59h1v1h-1zM769 70h1v1h-1zM769 81h1v1h-1zM769 92h1v1h-1zM769 103h1v1h-1zM769 115h1v1h-1zM769 126h1v1h-1zM769 137h1v1h-1zM769 148h1v1h-1zM769 159h1v1h-1zM769 170h1v1h-1zM769 181h1v1h-1zM769 193h1v1h-1zM769 204h1v1h-1zM769 215h1v1h-1zM769 226h1v1h-1zM769 237h1v1h-1zM769 248h1v1h-1zM769 260h1v1h-1zM769 271h1v1h-1zM769 282h1v1h-1zM769 293h1v1h-1zM769 304h1v1h-1zM769 315h1v1h-1zM769 327h1v1h-1zM769 338h1v1h-1zM769 349h1v1h-1zM769 360h1v1h-1zM769 371h1v1h-1zM769 382h1v1h-1zM769 394h1v1h-1zM769 405h1v1h-1zM769 416h1v1h-1zM769 427h1v1h-1zM769 438h1v1h-1zM769 449h1v1h-1zM769 461h1v1h-1zM769 472h1v1h-1zM769 483h1v1h-1zM769 494h1v1h-1zM769 505h1v1h-1zM769 516h1v1h-1zM769 528h1v1h-1zM769 539h1v1h-1zM769 550h1v1h-1zM769 561h1v1h-1zM769 572h1v1h-1zM769 583h1v1h-1zM769 594h1v1h-1zM769 606h1v1h-1zM769 617h1v1h-1zM769 628h1v1h-1zM769 639h1v1h-1zM769 650h1v1h-1zM769 661h1v1h-1zM769 673h1v1h-1zM769 684h1v1h-1zM769 695h1v1h-1zM769 706h1v1h-1zM769 717h1v1h-1zM769 728h1v1h-1zM769 740h1v1h-1zM769 751h1v1h-1zM781 25h1v1h-1zM781 81h1v1h-1zM781 137h1v1h-1zM781 193h1v1h-1zM781 248h1v1h-1zM781 304h1v1h-1zM781 360h1v1h-1zM781 416h1v1h-1zM781 472h1v1h-1zM781 528h1v1h-1zM781 583h1v1h-1zM781 639h1v1h-1zM781 695h1v1h-1zM781 751h1v1h-1z" fill="#ececec"/></svg>
<div class="a" style="left:775px;top:16px;width:11px;height:14px;background:#222"></div>
<div class="a" style="left:775px;top:30px;width:11px;height:1px;background:#8a8a8a"></div>
<div class="a" style="left:0;top:15px;width:786px;height:1px;background:#000"></div>
<svg class="a" style="left:0;top:0" width="786" height="761" shape-rendering="crispEdges">
<g stroke="#b4a6a6" fill="none" stroke-width="1">
<path d="M168.5 227.5H786M168.5 227.5V380.5H786"/>
<path d="M229 262.5H786"/>
<path d="M203.5 261V340"/>
<path d="M203.5 228 L197 261.5 H210.5 Z"/>
<path d="M289 339.5 V353 L318 346.5 Z"/>
<path d="M209 346.5H786"/>
<path d="M205 287.5H263" stroke-dasharray="6 3"/>
<path d="M262.5 287V346" stroke-dasharray="6 3"/>
</g>
<g stroke="#b4a6a6" fill="none" stroke-width="1" shape-rendering="auto">
<path d="M204.5 285 A24.5 23 0 0 1 229 262.5"/>
<circle cx="203.5" cy="346.5" r="6"/>
<path d="M203 346 L209 339"/>
<path d="M327.5 339.5 L333.5 346 M333.5 339.5 L327.5 346"/>
</g>
<g stroke="#e8e8e8" fill="none" stroke-width="1">
<path d="M175 246.5 H210 L237.5 304"/>
<path d="M219.5 265.5 L221.5 283 L230.5 278.5 Z"/>
<path d="M114.5 254.5V237.5H126.5L128.5 239.5V244.5L126.5 246.5H114.5M126.5 246.5L128.5 249V254.5"/>
<path d="M164.5 237.5H150.5V244.5H162.5L164.5 246.5V252.5L162.5 254.5H150.5L149.5 253.5"/>
</g>
</svg>
<div class="a" style="left:310px;top:137px;width:90px;height:56px;background:#fff"></div>
<div class="t" style="left:309px;top:135px;color:#a82ac0;font-size:12px">改成这个样子</div>
<div class="a" style="left:421px;top:36px;width:354px;height:725px;background:#ececec;border-left:1px solid #707070;border-top:1px solid #000"></div>
<div class="a" style="left:422px;top:16px;width:353px;height:20px;border-radius:4px 5px 0 0;background:linear-gradient(#a8a8b0 0%,#6e6e74 8%,#68686e 22%,#58585e 34%,#1e1e1e 36%,#1e1e1e 100%)"></div>
<div class="a" style="left:442px;top:17px;width:1px;height:19px;background:#b4b4b4"></div>
<div class="a" style="left:754px;top:17px;width:1px;height:19px;background:#9a9a9a"></div>
<div class="t" style="left:448px;top:16px;color:#fff;font-size:16px;font-weight:bold;line-height:18px;letter-spacing:0.5px">尺寸样式</div>
<svg class="a" style="left:422px;top:16px" width="353" height="20">
<path d="M4 5 L11 7.5 L9 9.5 L14 14 L12.5 15.5 L8 11 L6 13 Z" fill="#fff"/>
<path d="M338 6 L347 15 M347 6 L338 15" stroke="#fff" stroke-width="3"/>
</svg>
<div class="tab" style="left:433px;top:47px;width:109px;height:18px;line-height:16px">径向</div>
<div class="tab" style="left:543px;top:47px;width:109px;height:18px;line-height:16px">坐标</div>
<div class="tab" style="left:653px;top:47px;width:109px;height:18px;line-height:16px">层叠</div>
<div class="a" style="left:431px;top:81px;width:331px;height:582px;background:linear-gradient(#ebebeb 0%,#ebebeb 95.5%,#dcdcdc 100%);border:1px solid #8a8a8a;box-shadow:inset 1px 0 0 #fff,inset -1px 0 0 #fff"></div>
<div class="tab" style="left:512px;top:64px;width:94px;height:18px;line-height:16px;border-bottom:1px solid #555">直线/箭头</div>
<div class="tab" style="left:607px;top:64px;width:77px;height:18px;line-height:16px;border-bottom:1px solid #555">文字</div>
<div class="tab" style="left:685px;top:64px;width:77px;height:18px;line-height:16px;border-bottom:1px solid #555">单位</div>
<div class="tab" style="left:431px;top:62px;width:82px;height:20px;line-height:18px;background:#f0f0f0">尺寸</div>
<div class="obtn" style="left:438px;top:90px;width:18px;height:22px"></div>
<svg class="a" style="left:438px;top:90px" width="18" height="22"><rect x="8" y="4" width="2" height="14" fill="#10106a"/></svg>
<div class="obtn" style="left:462px;top:90px;width:22px;height:22px"></div>
<svg class="a" style="left:462px;top:90px" width="22" height="22"><path d="M4 11 L17 6 V16 Z" fill="#10106a"/></svg>
<div class="combo" style="left:490px;top:90px;width:93px;height:24px"><div class="cbtn" style="width:17px"></div><div class="triw" style="left:77px;top:8px"></div><div class="tri" style="left:78px;top:8px"></div></div>
<svg class="a" style="left:490px;top:90px" width="76" height="24"><g fill="none" stroke="#10106a" stroke-width="2"><path d="M9 7V18.6M12 13H18.6M49 13H64M69 7.2V18.6"/></g>
<g fill="none" stroke="#10106a" stroke-width="1.7"><path d="M21.2 9.4L27.799999999999997 16.6M27.799999999999997 9.4L21.2 16.6M32.2 9.4L38.800000000000004 16.6M38.800000000000004 9.4L32.2 16.6M40.4 9.4L47.0 16.6M47.0 9.4L40.4 16.6"/></g>
<rect x="29.5" y="14.5" width="2" height="2" fill="#10106a"/>
<path d="M10 13L15.5 10.5V15.5Z M67 13L62 10.2V15.8Z" fill="#10106a"/>
<defs><pattern id="dith" width="2" height="2" patternUnits="userSpaceOnUse"><rect width="1" height="1" fill="#000"/><rect x="1" y="1" width="1" height="1" fill="#000"/></pattern></defs>
<path d="M33.5 12.5L40 5.5H46L39 13Z" fill="url(#dith)"/>
<path d="M40 5.5H48.5V11" stroke="#201020" stroke-width="1.2" fill="none"/></svg>
<div class="obtn" style="left:589px;top:90px;width:22px;height:22px"></div>
<svg class="a" style="left:589px;top:90px" width="22" height="22"><path d="M18 11 L5 6 L6.5 11 L5 16 Z" fill="#10106a"/></svg>
<div class="obtn" style="left:617px;top:90px;width:18px;height:22px"></div>
<svg class="a" style="left:617px;top:90px" width="18" height="22"><rect x="8" y="4" width="2" height="14" fill="#10106a"/></svg>
<div class="combo" style="left:640px;top:90px;width:94px;height:24px"><div class="cbtn" style="width:17px"></div><div class="triw" style="left:78px;top:8px"></div><div class="tri" style="left:79px;top:8px"></div></div>
<svg class="a" style="left:640px;top:90px" width="77" height="24"><g fill="none" stroke="#10106a" stroke-width="2"><path d="M9.3 13H15M20 7.3V18.4M32 7.3V18.4M37 13H42.6"/></g>
<g fill="none" stroke="#10106a" stroke-width="1.6"><path d="M45.2 9.5L51.800000000000004 16.5M51.800000000000004 9.5L45.2 16.5M56.2 9.5L62.800000000000004 16.5M62.800000000000004 9.5L56.2 16.5M64.4 9.5L71.0 16.5M71.0 9.5L64.4 16.5"/></g>
<rect x="53.5" y="14.5" width="2" height="2" fill="#10106a"/>
<path d="M19 13L14 10.5V15.5Z M33 13L38 10.5V15.5Z" fill="#10106a"/></svg>
<div class="combo" style="left:438px;top:118px;width:51px;height:32px"><div class="cbtn" style="width:17px"></div><div class="triw" style="left:35px;top:12px"></div><div class="tri" style="left:36px;top:12px"></div></div>
<svg class="a" style="left:438px;top:118px" width="34" height="32"><g fill="none" stroke="#000" stroke-width="1.1"><path d="M7 13L12 17.7M12 13L7 17.7M17 13L22 17.7M22 13L17 17.7M23.2 13L28.2 17.7M28.2 13L23.2 17.7"/></g>
<rect x="14" y="17" width="1.2" height="1.2" fill="#000"/>
<path d="M23.4 10.5 L28.9 6.1 M8.1 25.6 L14.6 20.3" stroke="#000" stroke-width="2"/></svg>
<div class="t" style="left:492px;top:131px;color:#8a8a8a;-webkit-text-stroke:0.1px currentColor">角度</div>
<div class="dis" style="left:521px;top:129px;width:58px;height:17px;line-height:21px;padding-left:14px"><span>0.00000</span></div>
<div class="combo" style="left:590px;top:129px;width:93px;height:25px"><div class="cbtn" style="width:17px"></div><div class="triw" style="left:77px;top:8px"></div><div class="tri" style="left:78px;top:8px"></div></div>
<svg class="a" style="left:590px;top:129px" width="76" height="25"><g fill="none" stroke="#10106a" stroke-width="2"><path d="M10.2 5L16.7 12.4M16.7 5L10.2 12.4M20.9 5L27.4 12.4M27.4 5L20.9 12.4M29.2 5L35.7 12.4M35.7 5L29.2 12.4M37.5 5L44.0 12.4M44.0 5L37.5 12.4M45.8 5L52.3 12.4M52.3 5L45.8 12.4M53.6 5L60.1 12.4M60.1 5L53.6 12.4M61.4 5L67.9 12.4M67.9 5L61.4 12.4"/>
<path d="M7 17.5H71M18 14V21M60 14V21"/></g>
<rect x="17.7" y="10.5" width="2" height="2" fill="#10106a"/>
<path d="M19.5 17.5L25 14.5V20.5Z M58.5 17.5L53 14.5V20.5Z" fill="#10106a"/></svg>
<div class="grp" style="left:438px;top:157px;width:317px;height:136px"></div>
<div class="t" style="left:446px;-webkit-text-stroke:0;top:162px;font-weight:bold;letter-spacing:1px">精度和公差</div>
<div class="a" style="left:446px;top:183px;width:176px;height:30px;background:#d8d8d8;border:1px solid #a0a0a0;box-shadow:inset 1px 1px 0 #ececec"></div>
<div class="obtn" style="left:452px;top:190px;width:52px;height:18px;text-align:center;line-height:16px;color:#000">毫米</div>
<div class="gbtn" style="left:508px;top:190px;width:52px;height:18px;line-height:16px;color:#9a9a9a;border-color:#b8b8b8">毫米</div>
<div class="gbtn" style="left:564px;top:190px;width:52px;height:18px;line-height:16px;color:#9a9a9a;border-color:#b8b8b8">度</div>
<div class="combo" style="left:447px;top:221px;width:39px;height:31px"><div class="cbtn" style="width:17px"></div><div class="triw" style="left:23px;top:11px"></div><div class="tri" style="left:24px;top:11px"></div></div>
<svg class="a" style="left:447px;top:221px" width="22" height="31"><text x="11" y="20" font-family="Liberation Sans" font-size="12" font-weight="bold" fill="#10106a">0</text></svg>
<div class="combo" style="left:490px;top:221px;width:77px;height:31px"><div class="cbtn" style="width:17px"></div><div class="triw" style="left:61px;top:11px"></div><div class="tri" style="left:62px;top:11px"></div></div>
<svg class="a" style="left:490px;top:221px" width="60" height="31"><text x="30" y="20" text-anchor="middle" font-family="Liberation Sans" font-size="12" font-weight="bold" fill="#000">1.00</text></svg>
<div class="a" style="left:571px;top:220px;width:39px;height:32px;background:#efefef;border:1px solid #b0b0b0;border-radius:3px;overflow:hidden"><div class="a" style="left:21px;top:0;bottom:0;right:0;border-left:1px solid #b8b8b8;background:linear-gradient(90deg,#e8e8e8,#f6f6f6)"></div><div class="tri" style="left:25px;top:12px;border-top-color:#9a9a9a"></div></div>
<svg class="a" style="left:571px;top:220px" width="22" height="32"><text x="11" y="20" font-family="Liberation Sans" font-size="12" font-weight="bold" fill="#7a7a92">3</text></svg>
<div class="dis" style="left:615px;top:217px;width:57px;height:17px;line-height:19px;padding-left:11px"><span>0.10000</span></div>
<div class="dis" style="left:615px;top:235px;width:57px;height:17px;line-height:19px;padding-left:4px"><span>-0.10000</span></div>
<div class="a" style="left:439px;top:158px;width:314px;height:133px;overflow:hidden">
<div class="a" style="left:246px;top:62px;width:80px;height:32px;background:#efefef;border:1px solid #b0b0b0;border-radius:3px"><div class="a" style="left:58px;top:0;bottom:0;width:1px;background:#b8b8b8"></div></div>
<svg class="a" style="left:246px;top:62px" width="80" height="32"><text x="7" y="21" font-family="Liberation Sans" font-size="12" font-weight="bold" fill="#8a8a8a">1.00</text><text x="32" y="14" font-family="Liberation Sans" font-size="11" font-weight="bold" fill="#9a8a8a">+.05</text><text x="32" y="26" font-family="Liberation Sans" font-size="11" font-weight="bold" fill="#8a8a8a">−.00</text></svg>
</div>
<div class="gbtn" style="left:447px;top:256px;width:69px;height:28px;background:linear-gradient(#fdfdfd 0%,#f0f0f0 50%,#e2e2e2 100%)"></div>
<div class="gbtn" style="left:520px;top:256px;width:69px;height:28px;background:linear-gradient(#fdfdfd 0%,#f0f0f0 50%,#e2e2e2 100%)"></div>
<svg class="a" style="left:447px;top:256px" width="142" height="28">
<text x="5" y="19" font-family="Liberation Sans" font-size="14" fill="#8a2a2a" transform="scale(1,1)">(</text>
<text x="63" y="19" font-family="Liberation Sans" font-size="14" fill="#8a2a2a">)</text>
<text x="9" y="18" font-family="Liberation Sans" font-size="12" font-weight="bold" fill="#000" textLength="52" lengthAdjust="spacing">1.00±.05</text>
<rect x="77.5" y="6.5" width="61" height="15" rx="7.5" fill="none" stroke="#8a2a2a"/>
<text x="82" y="18" font-family="Liberation Sans" font-size="12" font-weight="bold" fill="#000" textLength="52" lengthAdjust="spacing">1.00±.05</text>
</svg>
<div class="t" style="left:437px;top:299px;color:#8a8a8a;-webkit-text-stroke:0.1px currentColor">链偏置</div>
<div class="dis" style="left:478px;top:297px;width:57px;height:17px;line-height:21px;padding-left:14px"><span>0.00000</span></div>
<div class="t" style="left:545px;top:299px;color:#8a8a8a;-webkit-text-stroke:0.1px currentColor">基线偏置</div>
<div class="dis" style="left:598px;top:297px;width:58px;height:17px;line-height:21px;padding-left:10px"><span>12.70000</span></div>
<div class="grp" style="left:438px;top:317px;width:317px;height:123px"></div>
<div class="t" style="left:446px;-webkit-text-stroke:0;top:322px;font-weight:bold;letter-spacing:1px">倒斜角</div>
<div class="combo" style="left:447px;top:344px;width:77px;height:42px"><div class="cbtn" style="width:17px"></div><div class="triw" style="left:61px;top:17px"></div><div class="tri" style="left:62px;top:17px"></div></div>
<svg class="a" style="left:447px;top:344px" width="60" height="42"><path d="M6 26.5H12L18 33.5V38.5" stroke="#000" stroke-width="2.2" fill="none"/><path d="M42 21.2H23L19 25.5" stroke="#10106a" stroke-width="1" fill="none"/><path d="M16 28.5L17.5 22.5L22 27.0Z" fill="#10106a"/><text x="28" y="19" font-family="Liberation Sans" font-size="11" font-weight="bold" fill="#10106a">C5</text></svg>
<div class="combo" style="left:530px;top:344px;width:67px;height:42px"><div class="cbtn" style="width:17px"></div><div class="triw" style="left:51px;top:17px"></div><div class="tri" style="left:52px;top:17px"></div></div>
<svg class="a" style="left:530px;top:344px" width="50" height="42"><path d="M6 26.5H12L18 33.5V38.5" stroke="#000" stroke-width="2.2" fill="none"/>
<path d="M27.5 21H23L19 25" stroke="#10106a" fill="none"/><path d="M16.5 27.5L18 21.5L22.5 26Z" fill="#10106a"/>
<text x="30" y="25" font-family="Liberation Sans" font-size="11" font-weight="bold" fill="#10106a">C5</text></svg>
<div class="combo" style="left:603px;top:344px;width:85px;height:42px"><div class="cbtn" style="width:17px"></div><div class="triw" style="left:69px;top:17px"></div><div class="tri" style="left:70px;top:17px"></div></div>
<svg class="a" style="left:603px;top:344px" width="68" height="42"><path d="M6 26.5H12L18 33.5V38.5" stroke="#000" stroke-width="2.2" fill="none"/><path d="M54.5 21.2H23L19 25.5" stroke="#10106a" stroke-width="1" fill="none"/><path d="M16 28.5L17.5 22.5L22 27.0Z" fill="#10106a"/><text x="28" y="19.5" font-family="Liberation Sans" font-size="11" font-weight="bold" fill="#10106a" textLength="26" lengthAdjust="spacingAndGlyphs">5x45</text></svg>
<div class="a" style="left:447px;top:392px;width:77px;height:39px;background:#efefef;border:1px solid #b0b0b0;border-radius:3px;overflow:hidden"><div class="a" style="left:59px;top:0;bottom:0;right:0;border-left:1px solid #b8b8b8;background:linear-gradient(90deg,#e8e8e8,#f6f6f6)"></div><div class="tri" style="left:63px;top:15px;border-top-color:#9a9a9a"></div></div>
<svg class="a" style="left:447px;top:392px" width="60" height="39"><path d="M6 22.5H12.5L18.5 28.5V35.0H6Z" fill="#a8a8a8"/><path d="M42 17.2H23L19 22" stroke="#8a8090" stroke-width="1" fill="none"/><path d="M16 25L17.5 19L22 23.5Z" fill="#8a8090"/><text x="28" y="15" font-family="Liberation Sans" font-size="11" font-weight="bold" fill="#8a8090">C5</text></svg>
<div class="dis" style="left:530px;top:392px;width:67px;height:17px;line-height:15px;padding-left:3px;color:#9a9a9a">C</div>
<div class="t" style="left:601px;top:394px;color:#000">间距</div>
<div class="a inp" style="left:632px;top:393px;width:56px;height:16px;background:#fff;border:1px solid #555;border-radius:3px;box-shadow:inset 0 1px 0 #aaa;overflow:hidden;font-family:'Liberation Mono',monospace;font-size:12px;color:#000;line-height:18px;padding-left:13px"><span>1.00000</span></div>
<div class="grp" style="left:438px;top:443px;width:317px;height:116px"></div>
<div class="t" style="left:446px;-webkit-text-stroke:0;top:448px;font-weight:bold;letter-spacing:1px">窄尺寸</div>
<div class="combo" style="left:447px;top:470px;width:51px;height:32px"><div class="cbtn" style="width:17px"></div><div class="triw" style="left:35px;top:12px"></div><div class="tri" style="left:36px;top:12px"></div></div>
<svg class="a" style="left:447px;top:470px" width="34" height="32"><g stroke="#10106a" stroke-width="2" fill="none"><path d="M9 14V22M26 14V22M10 16.5H25"/></g>
<path d="M10 16.5L14 14.5V18.5Z M25 16.5L21 14.5V18.5Z" fill="#10106a"/>
<path d="M9 24.5H27" stroke="#000" stroke-width="2"/>
<path d="M16 10.5L20 14.5M20 10.5L16 14.5" stroke="#5a1a1a" stroke-width="1.4"/></svg>
<div class="a" style="left:503px;top:469px;width:76px;height:42px;background:#c6c6c6;border:1px solid #8a8a8a;box-shadow:inset 1px 1px 0 #d8d8d8"></div>
<div class="gbtn" style="left:509px;top:475px;width:30px;height:31px;border:2px solid #a4a4a4;border-radius:3px;box-shadow:inset 0 0 0 1px #d8d8d8;background:linear-gradient(#fbfbfb,#ececec)"></div>
<svg class="a" style="left:509px;top:475px" width="30" height="31"><g stroke="#707070" fill="none" stroke-width="1" stroke-dasharray="1.2 0.8">
<path d="M5.8 19.3L21.4 13.1M5.3 17.4L8.9 24.5M20.2 10.3L23.8 17.4M9.3 26.8L24.5 19.3"/></g>
<g stroke="#707070" fill="none" stroke-width="1"><path d="M7.2 5.1L10 9.3M10 5.1L7.2 9.3M6.3 11.5H10.8L12.4 14.3"/></g>
<path d="M6.5 19L10.5 16.2L11 18.6Z M20.5 13.4L16.5 14.2L17.5 16.2Z" fill="#707070"/></svg>
<div class="gbtn" style="left:543px;top:475px;width:30px;height:31px;border:2px solid #a4a4a4;border-radius:3px;box-shadow:inset 0 0 0 1px #d8d8d8;background:linear-gradient(#fbfbfb,#ececec)"></div>
<svg class="a" style="left:543px;top:475px" width="30" height="31"><g stroke="#707070" fill="none" stroke-width="1" stroke-dasharray="1.2 0.8">
<path d="M6.5 19.3L21.6 12.7M5.3 17.4L9.6 26M20.2 10.3L23.8 17.9M9.8 26.8L24.5 19.5"/></g>
<g stroke="#8a7070" fill="none" stroke-width="1"><path d="M12.2 5.5L18.8 7.5M15 3.5L16 9.5M13.6 14.5V10.3L17 9"/></g>
<path d="M7.5 18.8L11.5 16L12 18.4Z M20.5 13.2L16.5 14L17.5 16Z" fill="#707070"/></svg>
<div class="a" style="left:583px;top:470px;width:60px;height:28px;background:#efefef;border:1px solid #b0b0b0;border-radius:3px;overflow:hidden"><div class="a" style="left:41px;top:0;bottom:0;right:0;border-left:1px solid #b8b8b8;background:linear-gradient(90deg,#e8e8e8,#f6f6f6)"></div><div class="tri" style="left:46px;top:10px;border-top-color:#9a9a9a"></div></div>
<svg class="a" style="left:583px;top:470px" width="42" height="28"><circle cx="13.5" cy="14" r="2.5" fill="#8a8a9a"/><path d="M14 14H36" stroke="#8a8a9a"/></svg>
<div class="t" style="left:446px;top:515px;color:#929292;-webkit-text-stroke:0.1px currentColor">文本偏置</div>
<div class="t" style="left:446px;top:535px;color:#929292;-webkit-text-stroke:0.1px currentColor">指引线角度</div>
<div class="dis" style="left:688px;top:513px;width:57px;height:17px;line-height:21px;padding-left:8px"><span>10.00000</span></div>
<div class="dis" style="left:688px;top:534px;width:57px;height:17px;line-height:19px;padding-left:8px"><span>60.00000</span></div>
<div class="gbtn" style="left:432px;top:672px;width:107px;height:22px;line-height:20px">继承</div>
<div class="gbtn" style="left:543px;top:672px;width:107px;height:22px;line-height:20px">重置</div>
<div class="gbtn" style="left:654px;top:672px;width:107px;height:22px;line-height:20px">加载默认设置</div>
<div class="gbtn" style="left:432px;top:698px;width:107px;height:22px;line-height:20px">全部继承</div>
<div class="gbtn" style="left:543px;top:698px;width:107px;height:22px;line-height:20px">全部重置</div>
<div class="gbtn" style="left:654px;top:698px;width:107px;height:22px;line-height:20px">加载所有默认设置</div>
<div class="a" style="left:428px;top:730px;width:339px;height:1px;background:#c8c8c8;box-shadow:0 1px 0 #fff"></div>
<div class="gbtn" style="left:647px;top:736px;width:52px;height:18px;line-height:16px;border-color:#3a6a3a;background:linear-gradient(#f4fbf2 0%,#dcf2d6 45%,#8ee27a 55%,#72d85a 75%,#a8ee98 100%);box-shadow:inset 0 1px 0 #4a8a4a">确定</div>
<div class="gbtn" style="left:706px;top:736px;width:51px;height:18px;line-height:16px">取消</div>
<svg class="a" style="left:0;top:0" width="786" height="761" shape-rendering="crispEdges">
<path d="M410.5 105.5H504.5V165.5H410.5Z" stroke="#b030c8" fill="none"/>
</svg>
</body></html>
